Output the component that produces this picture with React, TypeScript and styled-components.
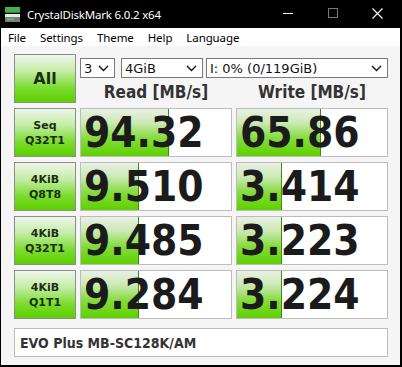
import styled, { createGlobalStyle } from 'styled-components'

const GlobalStyle = createGlobalStyle`
  html, body {
    margin: 0;
    padding: 0;
    background: #fff;
  }
`

type Row = {
  top: string
  bottom: string
  read: string
  write: string
  readBar: number
  writeBar: number
}

const rows: Row[] = [
  { top: 'Seq', bottom: 'Q32T1', read: '94.32', write: '65.86', readBar: 88, writeBar: 84 },
  { top: '4KiB', bottom: 'Q8T8', read: '9.510', write: '3.414', readBar: 58, writeBar: 45 },
  { top: '4KiB', bottom: 'Q32T1', read: '9.485', write: '3.223', readBar: 58, writeBar: 45 },
  { top: '4KiB', bottom: 'Q1T1', read: '9.284', write: '3.224', readBar: 58, writeBar: 45 },
]

const Chevron = () => (
  <svg width="11" height="7" viewBox="0 0 11 7">
    <path d="M1 1 L5.5 5.5 L10 1" fill="none" stroke="#111" strokeWidth="1.4" />
  </svg>
)

const AppIcon = () => (
  <svg width="17" height="17" viewBox="0 0 17 17">
    <rect x="1" y="1" width="15" height="5" fill="#3fb34a" />
    <rect x="1" y="6" width="15" height="1" fill="#2a7d33" />
    <rect x="1" y="8" width="15" height="3" fill="#e8e8e8" />
    <rect x="1" y="11" width="15" height="5" fill="#7b7b7b" />
    <rect x="3" y="12.5" width="7" height="1.5" fill="#4fd05a" />
  </svg>
)

export default function App() {
  return (
    <>
      <GlobalStyle />
      <Window>
        <TitleBar>
          <AppIcon />
          <Title>CrystalDiskMark 6.0.2 x64</Title>
          <Controls>
            <Control>
              <svg width="10" height="10" viewBox="0 0 10 10">
                <path d="M0 5.5 H10" stroke="#fff" strokeWidth="1" />
              </svg>
            </Control>
            <Control>
              <svg width="10" height="10" viewBox="0 0 10 10">
                <rect x="0.5" y="0.5" width="9" height="9" fill="none" stroke="#777" strokeWidth="1" />
              </svg>
            </Control>
            <Control>
              <svg width="11" height="11" viewBox="0 0 11 11">
                <path d="M0.5 0.5 L10.5 10.5 M10.5 0.5 L0.5 10.5" stroke="#fff" strokeWidth="1.1" />
              </svg>
            </Control>
          </Controls>
        </TitleBar>
        <MenuBar>
          <MenuItem>File</MenuItem>
          <MenuItem>Settings</MenuItem>
          <MenuItem>Theme</MenuItem>
          <MenuItem>Help</MenuItem>
          <MenuItem>Language</MenuItem>
        </MenuBar>
        <Body>
          <Grid>
            <TestButton $big>All</TestButton>
            <TopArea>
              <Selects>
                <Select $width={35}>
                  <span>3</span>
                  <Chevron />
                </Select>
                <Select $width={82} $gap={6}>
                  <span>4GiB</span>
                  <Chevron />
                </Select>
                <Select $width={182} $gap={3}>
                  <span>I: 0% (0/119GiB)</span>
                  <Chevron />
                </Select>
              </Selects>
              <Headers>
                <Header>Read [MB/s]</Header>
                <Header>Write [MB/s]</Header>
              </Headers>
            </TopArea>
            {rows.map((r, i) => (
              <RowFrag key={i} row={r} />
            ))}
          </Grid>
          <Comment>EVO Plus MB-SC128K/AM</Comment>
        </Body>
      </Window>
    </>
  )
}

const RowFrag = ({ row }: { row: Row }) => (
  <>
    <TestButton>
      {row.top}
      <br />
      {row.bottom}
    </TestButton>
    <Meter>
      <Bar style={{ width: row.readBar }} />
      <Value>{row.read}</Value>
    </Meter>
    <Meter>
      <Bar style={{ width: row.writeBar }} />
      <Value>{row.write}</Value>
    </Meter>
  </>
)

const Window = styled.div`
  width: 402px;
  height: 367px;
  box-sizing: border-box;
  background: #000;
  border-left: 1px solid #000;
  border-right: 2px solid #000;
  border-bottom: 2px solid #000;
  display: flex;
  flex-direction: column;
  overflow: hidden;
`

const TitleBar = styled.div`
  height: 28px;
  flex: none;
  display: flex;
  align-items: center;
  padding-left: 3px;
  background: #000;
  color: #fff;
  svg {
    flex: none;
  }
`

const Title = styled.div`
  margin-left: 6px;
  font-family: 'Noto Sans', sans-serif;
  font-size: 11.5px;
  letter-spacing: -0.2px;
`

const Controls = styled.div`
  margin-left: auto;
  display: flex;
  height: 100%;
`

const Control = styled.div`
  width: 45px;
  display: flex;
  align-items: center;
  justify-content: center;
  margin-top: -2px;
`

const MenuBar = styled.div`
  height: 18px;
  flex: none;
  background: #fff;
  display: flex;
  align-items: center;
  padding-left: 7px;
  gap: 14px;
`

const MenuItem = styled.span`
  font-family: 'Noto Sans', sans-serif;
  font-size: 11.5px;
  letter-spacing: -0.1px;
  color: #000;
`

const Body = styled.div`
  flex: 1;
  background: #f5f5f5;
  padding: 8px 12px 0 13px;
  display: flex;
  flex-direction: column;
`

const Grid = styled.div`
  display: grid;
  grid-template-columns: 62px 152px 152px;
  grid-auto-rows: 49px;
  column-gap: 4px;
  row-gap: 5px;
`

const TestButton = styled.div<{ $big?: boolean }>`
  box-sizing: border-box;
  border: 1px solid #8d8d8d;
  background: linear-gradient(to bottom, #eef6ea 0%, #c3eca4 35%, #7bdc2e 70%, #5ccf00 100%);
  display: flex;
  align-items: center;
  justify-content: center;
  text-align: center;
  font-family: 'DejaVu Sans', sans-serif;
  font-weight: bold;
  font-size: ${(p) => (p.$big ? '16px' : '11px')};
  line-height: 15px;
  color: #1c2e12;
`

const TopArea = styled.div`
  grid-column: 2 / 4;
  display: flex;
  flex-direction: column;
`

const Selects = styled.div`
  display: flex;
  margin-top: 4px;
`

const Select = styled.div<{ $width: number; $gap?: number }>`
  box-sizing: border-box;
  width: ${(p) => p.$width}px;
  margin-left: ${(p) => p.$gap ?? 0}px;
  height: 20px;
  border: 1px solid #7a7a7a;
  background: #fff;
  display: flex;
  align-items: center;
  justify-content: space-between;
  padding: 0 5px 0 3px;
  font-family: 'DejaVu Sans', sans-serif;
  font-size: 13px;
  color: #111;
`

const Headers = styled.div`
  flex: 1;
  display: grid;
  grid-template-columns: 152px 152px;
  column-gap: 4px;
  align-items: center;
`

const Header = styled.div`
  text-align: center;
  font-family: 'DejaVu Sans Condensed', 'DejaVu Sans', sans-serif;
  font-stretch: condensed;
  font-weight: bold;
  font-size: 17px;
  color: #333;
  padding-top: 2px;
`

const Meter = styled.div`
  box-sizing: border-box;
  border: 1px solid #bcbcbc;
  background: #fff;
  display: grid;
  > * {
    grid-area: 1 / 1;
  }
`

const Bar = styled.div`
  box-sizing: border-box;
  height: 100%;
  border-right: 1px solid #3c8a1c;
  background: linear-gradient(to bottom, #e9f0e5 0%, #cbe9b4 30%, #86dc3e 62%, #5fd000 100%);
`

const Value = styled.div`
  align-self: center;
  padding-left: 3px;
  font-family: 'DejaVu Sans Condensed', 'DejaVu Sans', sans-serif;
  font-stretch: condensed;
  font-weight: bold;
  font-size: 42px;
  line-height: 47px;
  color: #1b1b1b;
  position: relative;
`

const Comment = styled.div`
  box-sizing: border-box;
  margin-top: 9px;
  height: 29px;
  border: 1px solid #bcbcbc;
  background: #fff;
  display: flex;
  align-items: center;
  padding-left: 5px;
  font-family: 'DejaVu Sans Condensed', 'DejaVu Sans', sans-serif;
  font-stretch: condensed;
  font-weight: bold;
  font-size: 14px;
  color: #333;
`
